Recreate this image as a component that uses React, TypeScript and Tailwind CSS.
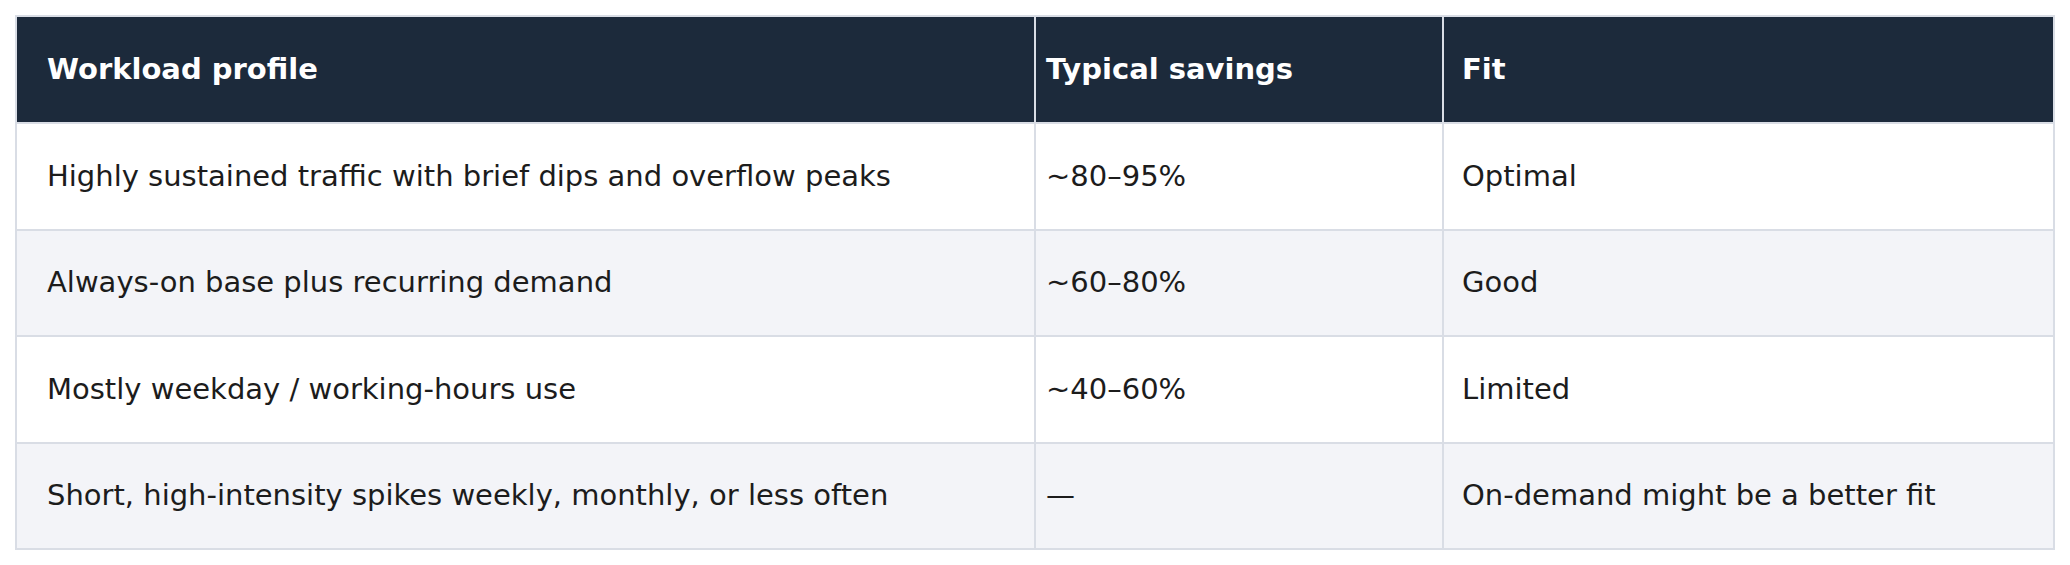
const rows = [
  {
    profile: "Highly sustained traffic with brief dips and overflow peaks",
    savings: "~80–95%",
    fit: "Optimal",
  },
  { profile: "Always-on base plus recurring demand", savings: "~60–80%", fit: "Good" },
  { profile: "Mostly weekday / working-hours use", savings: "~40–60%", fit: "Limited" },
  {
    profile: "Short, high-intensity spikes weekly, monthly, or less often",
    savings: "—",
    fit: "On-demand might be a better fit",
  },
];

export default function App() {
  return (
    <div className="bg-white p-[15px] font-['DejaVu_Sans',sans-serif] text-[29px] text-[#1c1c1c]">
      <table className="w-[2040px] table-fixed border-collapse border-2 border-[#d9dde5]">
        <colgroup>
          <col className="w-[1019px]" />
          <col className="w-[408px]" />
          <col />
        </colgroup>
        <thead>
          <tr className="h-[107px] bg-[#1c2a3b] text-white font-bold">
            <th className="border-2 border-[#d9dde5] pl-[30px] text-left font-bold">Workload profile</th>
            <th className="border-2 border-[#d9dde5] pl-[10px] text-left font-bold">Typical savings</th>
            <th className="border-2 border-[#d9dde5] pl-[18px] text-left font-bold">Fit</th>
          </tr>
        </thead>
        <tbody>
          {rows.map((r, i) => (
            <tr key={r.profile} className={i % 2 === 1 ? "h-[106px] bg-[#f3f4f8]" : "h-[107px] bg-white"}>
              <td className="border-2 border-[#d9dde5] pl-[30px]">{r.profile}</td>
              <td className="border-2 border-[#d9dde5] pl-[10px]">{r.savings}</td>
              <td className="border-2 border-[#d9dde5] pl-[18px]">{r.fit}</td>
            </tr>
          ))}
        </tbody>
      </table>
    </div>
  );
}
